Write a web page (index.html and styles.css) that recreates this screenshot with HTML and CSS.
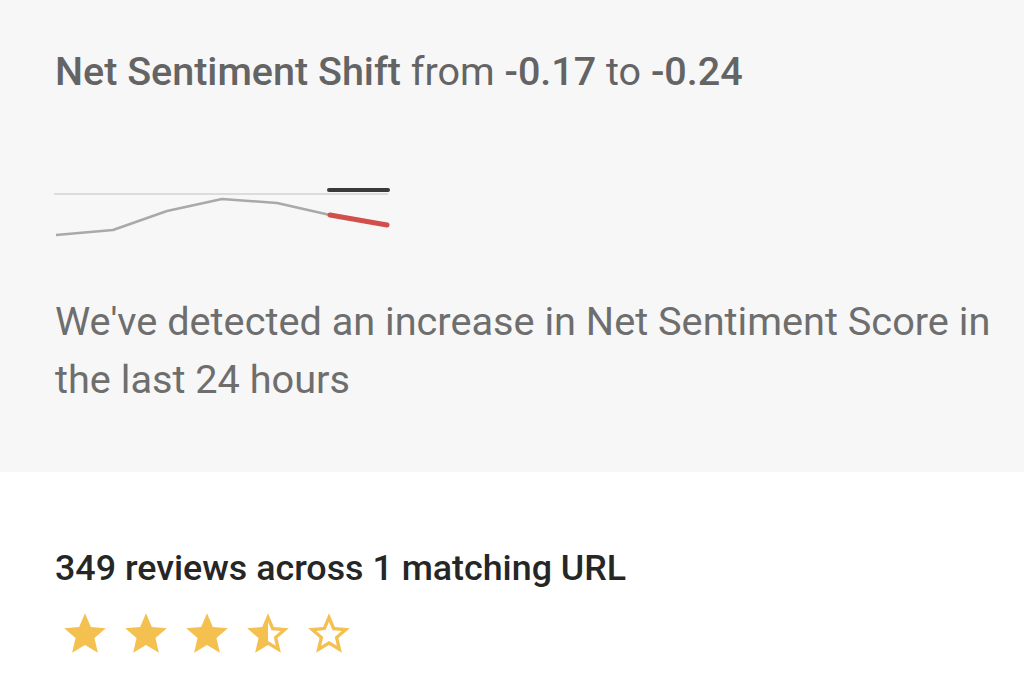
FILE: index.html
```html
<!DOCTYPE html>
<html>
<head>
<meta charset="utf-8">
<link rel="stylesheet" href="styles.css">
</head>
<body>
<section class="alert">
  <h1 class="title"><span class="strong">Net Sentiment Shift</span> from <span class="strong">-0.17</span> to <span class="strong">-0.24</span></h1>
  <svg class="spark" width="340" height="60" viewBox="54 180 340 60">
    <line x1="54" y1="194" x2="388" y2="194" stroke="#dcdcdc" stroke-width="2"/>
    <polyline points="56,235 113,230 167,211 222,199 277,203 330,215" fill="none" stroke="#a9a9a9" stroke-width="2.5" stroke-linejoin="round"/>
    <line x1="330" y1="215" x2="387" y2="225" stroke="#d1504b" stroke-width="5" stroke-linecap="round"/>
    <line x1="329" y1="190" x2="388" y2="190" stroke="#3a3a3a" stroke-width="4" stroke-linecap="round"/>
  </svg>
  <p class="desc">We've detected an increase in Net Sentiment Score in the last 24 hours</p>
</section>
<section class="reviews">
  <div class="count">349 reviews across 1 matching URL</div>
  <div class="stars">
    <svg class="star" viewBox="0 0 24 24"><path d="M12 17.27L18.18 21l-1.64-7.03L22 9.24l-7.19-.61L12 2 9.19 8.63 2 9.24l5.46 4.73L5.82 21z" fill="#f4c150"/></svg>
    <svg class="star" viewBox="0 0 24 24"><path d="M12 17.27L18.18 21l-1.64-7.03L22 9.24l-7.19-.61L12 2 9.19 8.63 2 9.24l5.46 4.73L5.82 21z" fill="#f4c150"/></svg>
    <svg class="star" viewBox="0 0 24 24"><path d="M12 17.27L18.18 21l-1.64-7.03L22 9.24l-7.19-.61L12 2 9.19 8.63 2 9.24l5.46 4.73L5.82 21z" fill="#f4c150"/></svg>
    <svg class="star" viewBox="0 0 24 24"><path d="M22 9.24l-7.19-.62L12 2 9.19 8.63 2 9.24l5.46 4.73L5.82 21 12 17.27 18.18 21l-1.63-7.03L22 9.24zM12 15.4V6.1l1.71 4.04 4.38.38-3.32 2.88 1 4.28L12 15.4z" fill="#f4c150"/></svg>
    <svg class="star" viewBox="0 0 24 24"><path d="M22 9.24l-7.19-.62L12 2 9.19 8.63 2 9.24l5.46 4.73L5.82 21 12 17.27 18.18 21l-1.63-7.03L22 9.24zM12 15.4l-3.76 2.27 1-4.28-3.32-2.88 4.38-.38L12 6.1l1.71 4.05 4.38.38-3.32 2.88 1 4.28L12 15.4z" fill="#f4c150"/></svg>
  </div>
</section>
</body>
</html>
```

FILE: styles.css
```css
html, body {
  margin: 0;
  padding: 0;
  background: #ffffff;
  font-family: Roboto, "Liberation Sans", sans-serif;
}
.alert {
  background: #f7f7f7;
  height: 472px;
  box-sizing: border-box;
  padding: 50px 10px 0 55px;
}
.title {
  margin: 0;
  font-size: 39.5px;
  font-weight: 400;
  color: #646464;
  line-height: 44px;
}
.strong {
  font-weight: 500;
}
.spark {
  display: block;
  margin-top: 86px;
  margin-left: -1px;
}
.desc {
  margin: 53px 0 0 0;
  font-size: 39.7px;
  line-height: 58px;
  color: #6e6e6e;
}
.reviews {
  padding: 74px 55px 0 55px;
}
.count {
  font-size: 35.8px;
  font-weight: 500;
  color: #262626;
  line-height: 44px;
}
.stars {
  display: flex;
  gap: 11px;
  margin-top: 19px;
  margin-left: 5px;
}
.star {
  width: 50px;
  height: 50px;
}
```
